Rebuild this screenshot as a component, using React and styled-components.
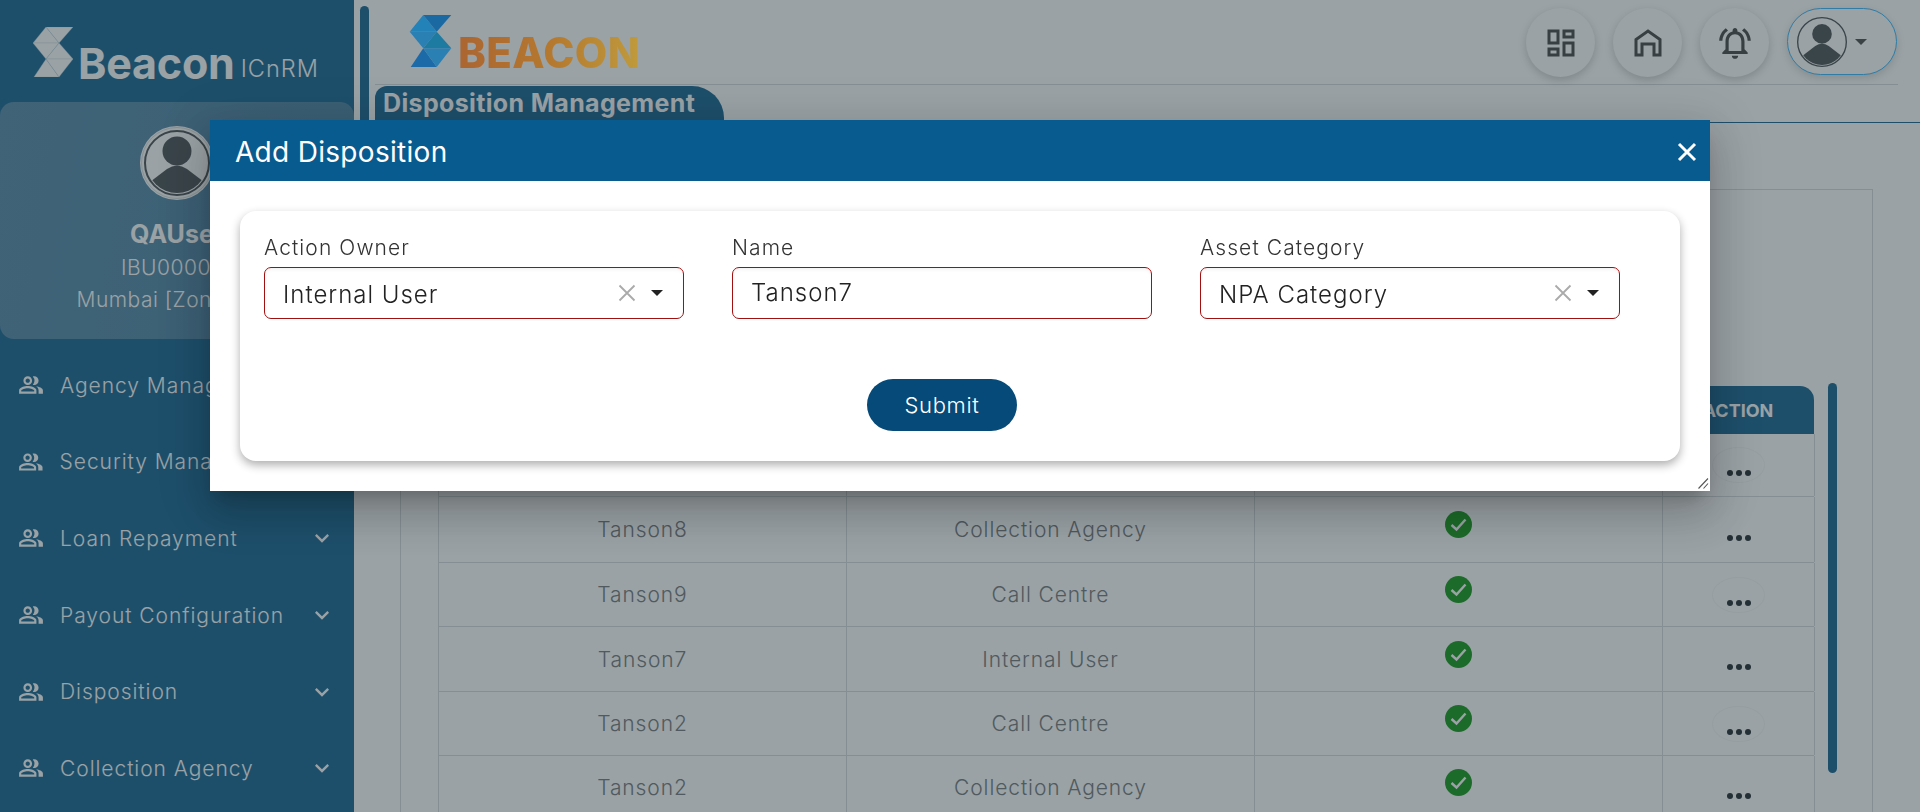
import React from 'react';
import styled, { createGlobalStyle } from 'styled-components';
import { MdOutlineDashboard, MdOutlineNotificationsActive, MdOutlinePeopleAlt, MdExpandMore } from 'react-icons/md';

const GlobalStyle = createGlobalStyle`
  html, body {
    margin: 0;
    height: 100%;
    background: #fff;
    font-family: Inter, "Open Sans", sans-serif;
  }
  * {
    box-sizing: border-box;
  }
`;

const Page = styled.div`
  display: flex;
  height: 100vh;
  overflow: hidden;
`;

const Sidebar = styled.aside`
  width: 354px;
  flex-shrink: 0;
  display: flex;
  flex-direction: column;
  background: #30769f;
  color: #fff;
`;

const BrandRow = styled.div`
  height: 102px;
  display: flex;
  align-items: flex-start;
  padding: 27px 0 0 33px;
`;

const BrandName = styled.span`
  font-size: 43px;
  font-weight: 700;
  line-height: 50px;
  letter-spacing: -0.2px;
  margin: 11px 0 0 5px;
`;

const BrandSuffix = styled.span`
  font-size: 23.5px;
  font-weight: 300;
  line-height: 30px;
  letter-spacing: 1px;
  margin: 27px 0 0 6px;
`;

const ProfileCard = styled.div`
  height: 237px;
  border-radius: 14px;
  background: linear-gradient(100deg, #6a96b3, #6090ae);
  display: flex;
  flex-direction: column;
  align-items: center;
  padding-top: 24px;
`;

const ProfileName = styled.div`
  font-size: 25px;
  font-weight: 700;
  line-height: 30px;
  margin-top: 19px;
`;

const ProfileLine = styled.div`
  font-size: 21px;
  font-weight: 300;
  line-height: 26px;
  letter-spacing: 0.5px;
  margin-top: 6px;
  white-space: nowrap;
`;

const Menu = styled.nav`
  margin-top: 8px;
  display: flex;
  flex-direction: column;
`;

const MenuItem = styled.div`
  height: 76.6px;
  display: flex;
  align-items: center;
  gap: 16px;
  padding: 0 18px 0 18px;
  font-size: 21px;
  font-weight: 300;
  letter-spacing: 0.95px;
`;

const MenuLabel = styled.span`
  flex: 1;
  white-space: nowrap;
`;

const Rail = styled.div`
  width: 21px;
  flex-shrink: 0;
  padding: 6px 0 0 6px;
`;

const RailThumb = styled.div`
  width: 9px;
  height: 300px;
  border-radius: 5px;
  background: #30769f;
`;

const Content = styled.main`
  flex: 1;
  min-width: 0;
  display: flex;
  flex-direction: column;
`;

const TopBar = styled.header`
  height: 85px;
  flex-shrink: 0;
  margin-right: 22px;
  padding: 8px 1px 0 34px;
  display: flex;
  align-items: flex-start;
  justify-content: space-between;
  border-bottom: 1px solid #dcdfe1;
`;

/* sits above the backdrop: the reference's logo colours stay bright */
const LogoLink = styled.a`
  position: relative;
  z-index: 11;
  display: flex;
  align-items: flex-start;
  margin-top: 7px;
`;

const LogoWord = styled.span`
  font-size: 42px;
  font-weight: 800;
  line-height: 40px;
  margin: 18px 0 0 6px;
  letter-spacing: 0.4px;
  background: linear-gradient(90deg, #ab6531 0%, #b4782f 50%, #bf9a3c 100%);
  -webkit-background-clip: text;
  background-clip: text;
  color: transparent;
`;

const TopActions = styled.div`
  display: flex;
  gap: 18px;
`;

const RoundButton = styled.button`
  width: 69px;
  height: 69px;
  border: none;
  border-radius: 50%;
  background: #fff;
  color: #5a5a5a;
  box-shadow: 0 3px 9px rgba(0, 0, 0, 0.18);
  display: flex;
  align-items: center;
  justify-content: center;
  padding: 0;
`;

const ProfilePill = styled.button`
  width: 110px;
  height: 67px;
  border: 1px solid #4dc0ff;
  border-radius: 34px;
  background: #fff;
  box-shadow: 0 3px 9px rgba(0, 0, 0, 0.14);
  display: flex;
  align-items: center;
  gap: 8px;
  padding: 0 0 0 9px;
`;

const Caret = styled.span`
  width: 0;
  height: 0;
  border-left: 6px solid transparent;
  border-right: 6px solid transparent;
  border-top: 6px solid ${(p) => p.$color || '#222'};
`;

const TabRow = styled.div`
  height: 38px;
  flex-shrink: 0;
  padding-top: 1px;
  border-bottom: 1px solid #30769f;
`;

const Tab = styled.div`
  width: 349px;
  height: 37px;
  padding: 2px 0 0 8px;
  background: #30769f;
  border-radius: 12px 32px 0 0;
  color: #fff;
  font-size: 25px;
  font-weight: 700;
  line-height: 30px;
  letter-spacing: 0.35px;
  white-space: nowrap;
`;

const OuterCard = styled.section`
  flex: 1;
  margin: 66px 47px 0 25px;
  padding: 196px 0 0 37px;
  border: 1px solid #dcdfe1;
  border-bottom: none;
  display: flex;
  align-items: flex-start;
  gap: 14px;
`;

const TableWrap = styled.div`
  width: 1376px;
  flex-shrink: 0;
`;

const Grid = styled.div`
  display: grid;
  grid-template-columns: 408px 408px 408px 152px;
`;

const HeadRow = styled(Grid)`
  height: 48px;
  background: #30769f;
  border-radius: 14px 14px 0 0;
  color: #fff;
  font-size: 18px;
  font-weight: 700;
`;

const HeadCell = styled.div`
  display: flex;
  align-items: center;
  justify-content: center;
`;

const Row = styled(Grid)`
  height: ${(p) => p.$h}px;
  border-bottom: 1px solid #dcdfe1;
  border-left: 1px solid #dcdfe1;
`;

const Cell = styled.div`
  display: flex;
  align-items: center;
  justify-content: center;
  border-right: 1px solid #dcdfe1;
  color: #84878a;
  font-size: 21px;
  font-weight: 300;
  letter-spacing: 0.9px;
`;

const StatusCell = styled(Cell)`
  padding-bottom: 10px;
`;

const MoreButton = styled.button`
  width: 53px;
  height: 36px;
  border: 1px solid ${(p) => (p.$ring ? 'rgba(0, 0, 0, 0.03)' : 'transparent')};
  border-radius: 50%;
  background: transparent;
  display: flex;
  align-items: center;
  justify-content: center;
  padding: 16px 0 0;
`;

const ScrollThumb = styled.div`
  width: 9px;
  height: 390px;
  margin-top: -3px;
  border-radius: 5px;
  background: #30769f;
`;

const Backdrop = styled.div`
  position: fixed;
  inset: 0;
  z-index: 10;
  background: rgba(2, 22, 30, 0.4);
  display: flex;
  justify-content: center;
  padding-top: 120px;
`;

const Modal = styled.div`
  position: relative;
  width: 1500px;
  height: 371px;
  background: #fff;
  box-shadow: 0 11px 15px -7px rgba(0, 0, 0, 0.2), 0 24px 38px 3px rgba(0, 0, 0, 0.14),
    0 9px 46px 8px rgba(0, 0, 0, 0.12);
`;

const ResizeGrip = styled.svg`
  position: absolute;
  right: 1px;
  bottom: 2px;
`;

const ModalHeader = styled.div`
  height: 61px;
  background: #085b8f;
  color: #fff;
  display: flex;
  align-items: center;
  justify-content: space-between;
  padding: 0 13px 0 25px;
`;

const ModalTitle = styled.h2`
  margin: 2px 0 0;
  font-size: 28px;
  font-weight: 400;
  letter-spacing: 0.3px;
`;

const CloseButton = styled.button`
  border: none;
  background: none;
  padding: 0;
  margin-top: 2px;
  display: flex;
`;

const FormCard = styled.form`
  width: 1440px;
  height: 250px;
  margin: 30px 0 0 30px;
  padding: 25px 0 0 24px;
  border-radius: 16px;
  background: #fff;
  box-shadow: 0 4px 10px rgba(0, 0, 0, 0.32);
`;

const FormInner = styled.div`
  width: 1356px;
  display: flex;
  flex-direction: column;
  align-items: center;
`;

const Fields = styled.div`
  width: 100%;
  display: grid;
  grid-template-columns: repeat(3, 420px);
  column-gap: 48px;
`;

const Field = styled.label`
  display: flex;
  flex-direction: column;
  gap: 7px;
`;

const FieldLabel = styled.span`
  font-size: 21px;
  font-weight: 300;
  line-height: 24px;
  letter-spacing: 1.1px;
  color: #333;
`;

const Control = styled.div`
  height: 52px;
  border: 1px solid #a01010;
  border-radius: 7px;
  display: flex;
  align-items: center;
  padding: 0 20px 0 18px;
  box-shadow: inset 0 3px 4px -2px rgba(0, 0, 0, 0.07);
`;

const ControlValue = styled.span`
  flex: 1;
  padding-top: 3px;
  font-size: 24px;
  font-weight: 300;
  letter-spacing: 1px;
  color: #222;
`;

const TextInput = styled.input`
  width: 100%;
  height: 100%;
  border: none;
  outline: none;
  background: none;
  padding: 0 0 2px;
  font-family: inherit;
  font-size: 24px;
  font-weight: 300;
  letter-spacing: 1px;
  color: #222;
`;

const ClearIcon = styled.svg`
  margin-right: 15px;
  flex-shrink: 0;
`;

const SubmitButton = styled.button`
  width: 150px;
  height: 52px;
  margin-top: 60px;
  border: none;
  border-radius: 26px;
  background: #054a78;
  color: #fff;
  font-family: inherit;
  font-size: 22px;
  font-weight: 300;
  letter-spacing: 0.7px;
`;

const rows = [
  { name: 'Tanson10', type: 'Internal User', h: 63, ring: true },
  { name: 'Tanson8', type: 'Collection Agency', h: 66 },
  { name: 'Tanson9', type: 'Call Centre', h: 64, ring: true },
  { name: 'Tanson7', type: 'Internal User', h: 65 },
  { name: 'Tanson2', type: 'Call Centre', h: 64, ring: true },
  { name: 'Tanson2', type: 'Collection Agency', h: 64 },
];

const menuItems = [
  'Agency Management',
  'Security Management',
  'Loan Repayment',
  'Payout Configuration',
  'Disposition',
  'Collection Agency',
];

const SLogo = ({ width, height, colors, seam }) => (
  <svg width={width} height={height} viewBox="0 0 40 50" stroke={seam} strokeWidth="0.35">
    <polygon points="13,0 26,16 0,16" fill={colors[0]} />
    <polygon points="13,0 40,0 26,16" fill={colors[1]} />
    <polygon points="0,16 26,16 13,32" fill={colors[2]} />
    <polygon points="26,16 40,32 13,32" fill={colors[3]} />
    <polygon points="13,32 26,50 1,50" fill={colors[4]} />
    <polygon points="13,32 40,32 26,50" fill={colors[5]} />
  </svg>
);

const Avatar = ({ size, ring, fill = '#5f6468' }) => (
  <svg width={size} height={size} viewBox="0 0 74 74">
    <clipPath id={`face${size}`}>
      <circle cx="37" cy="37" r={ring ? 30 : 34} />
    </clipPath>
    {ring && <circle cx="37" cy="37" r="37" fill="#fff" />}
    {ring && <circle cx="37" cy="37" r="35.5" fill="none" stroke="#dfe2e4" strokeWidth="1" />}
    <circle cx="37" cy="37" r={ring ? 32 : 36} fill="#fff" stroke={fill} strokeWidth="2" />
    <circle cx="37" cy="25" r="14.5" fill={fill} />
    <path d="M2 62 L27 43 Q37 36 47 43 L72 62 V74 H2 Z" fill={fill} clipPath={`url(#face${size})`} />
  </svg>
);

const HomeIcon = () => (
  <svg width="30" height="30" viewBox="0 0 30 30" fill="none" stroke="currentColor" strokeWidth="3">
    <path d="M3 27 V11.5 L15 3 L27 11.5 V27 H21 V16 H9 V27 Z" strokeLinejoin="miter" />
  </svg>
);

const CheckBadge = () => (
  <svg width="27" height="27" viewBox="0 0 27 27">
    <circle cx="13.5" cy="13.5" r="13.5" fill="#2fa432" />
    <path d="M6.5 14 L11.5 18.5 L20.5 8.5" fill="none" stroke="#fff" strokeWidth="2.4" />
  </svg>
);

const Dots = () => (
  <svg width="24" height="6" viewBox="0 0 24 6" fill="#3a4145">
    <circle cx="3" cy="3" r="3" />
    <circle cx="12" cy="3" r="3" />
    <circle cx="21" cy="3" r="3" />
  </svg>
);

const ClearX = () => (
  <ClearIcon width="18" height="18" viewBox="0 0 18 18" stroke="#aaa" strokeWidth="1.8">
    <path d="M1.5 1.5 L16.5 16.5 M16.5 1.5 L1.5 16.5" />
  </ClearIcon>
);

const SelectField = ({ label, value }) => (
  <Field>
    <FieldLabel>{label}</FieldLabel>
    <Control>
      <ControlValue>{value}</ControlValue>
      <ClearX />
      <Caret />
    </Control>
  </Field>
);

export default function App() {
  return (
    <Page>
      <GlobalStyle />
      <Sidebar>
        <BrandRow>
          <SLogo width={40} height={50} seam="#c3d5e0" colors={['#fff', '#fff', '#fff', '#fff', '#fff', '#fff']} />
          <BrandName>Beacon</BrandName>
          <BrandSuffix>ICnRM</BrandSuffix>
        </BrandRow>
        <ProfileCard>
          <Avatar size={74} ring />
          <ProfileName>QAUser</ProfileName>
          <ProfileLine>IBU000001</ProfileLine>
          <ProfileLine>Mumbai [Zone - 01]</ProfileLine>
        </ProfileCard>
        <Menu>
          {menuItems.map((label) => (
            <MenuItem key={label}>
              <MdOutlinePeopleAlt size={26} />
              <MenuLabel>{label}</MenuLabel>
              <MdExpandMore size={28} />
            </MenuItem>
          ))}
        </Menu>
      </Sidebar>
      <Rail>
        <RailThumb />
      </Rail>
      <Content>
        <TopBar>
          <LogoLink>
            <SLogo
              width={43}
              height={52}
              seam="none"
              colors={['#2382b8', '#1a69a3', '#2a7fb3', '#1d7aa0', '#1c6aa8', '#2a7fb3']}
            />
            <LogoWord>BEACON</LogoWord>
          </LogoLink>
          <TopActions>
            <RoundButton>
              <MdOutlineDashboard size={36} />
            </RoundButton>
            <RoundButton>
              <HomeIcon />
            </RoundButton>
            <RoundButton>
              <MdOutlineNotificationsActive size={38} />
            </RoundButton>
            <ProfilePill>
              <Avatar size={50} />
              <Caret $color="#5f5f5f" />
            </ProfilePill>
          </TopActions>
        </TopBar>
        <TabRow>
          <Tab>Disposition Management</Tab>
        </TabRow>
        <OuterCard>
          <TableWrap>
            <HeadRow>
              <HeadCell>NAME</HeadCell>
              <HeadCell>ACTION OWNER</HeadCell>
              <HeadCell>STATUS</HeadCell>
              <HeadCell>ACTION</HeadCell>
            </HeadRow>
            {rows.map((row, i) => (
              <Row key={i} $h={row.h}>
                <Cell>{row.name}</Cell>
                <Cell>{row.type}</Cell>
                <StatusCell>
                  <CheckBadge />
                </StatusCell>
                <Cell>
                  <MoreButton $ring={row.ring}>
                    <Dots />
                  </MoreButton>
                </Cell>
              </Row>
            ))}
          </TableWrap>
          <ScrollThumb />
        </OuterCard>
      </Content>
      <Backdrop>
        <Modal>
          <ModalHeader>
            <ModalTitle>Add Disposition</ModalTitle>
            <CloseButton type="button" aria-label="Close">
              <svg width="20" height="20" viewBox="0 0 20 20" stroke="#fff" strokeWidth="3">
                <path d="M2 2 L18 18 M18 2 L2 18" />
              </svg>
            </CloseButton>
          </ModalHeader>
          <FormCard>
            <FormInner>
              <Fields>
                <SelectField label="Action Owner" value="Internal User" />
                <Field>
                  <FieldLabel>Name</FieldLabel>
                  <Control>
                    <TextInput defaultValue="Tanson7" />
                  </Control>
                </Field>
                <SelectField label="Asset Category" value="NPA Category" />
              </Fields>
              <SubmitButton type="button">Submit</SubmitButton>
            </FormInner>
          </FormCard>
          <ResizeGrip width="11" height="11" viewBox="0 0 11 11" stroke="#555" strokeWidth="1.1">
            <path d="M0.5 10.5 L10 0.5 M5.5 10.5 L10 5.5" />
          </ResizeGrip>
        </Modal>
      </Backdrop>
    </Page>
  );
}
